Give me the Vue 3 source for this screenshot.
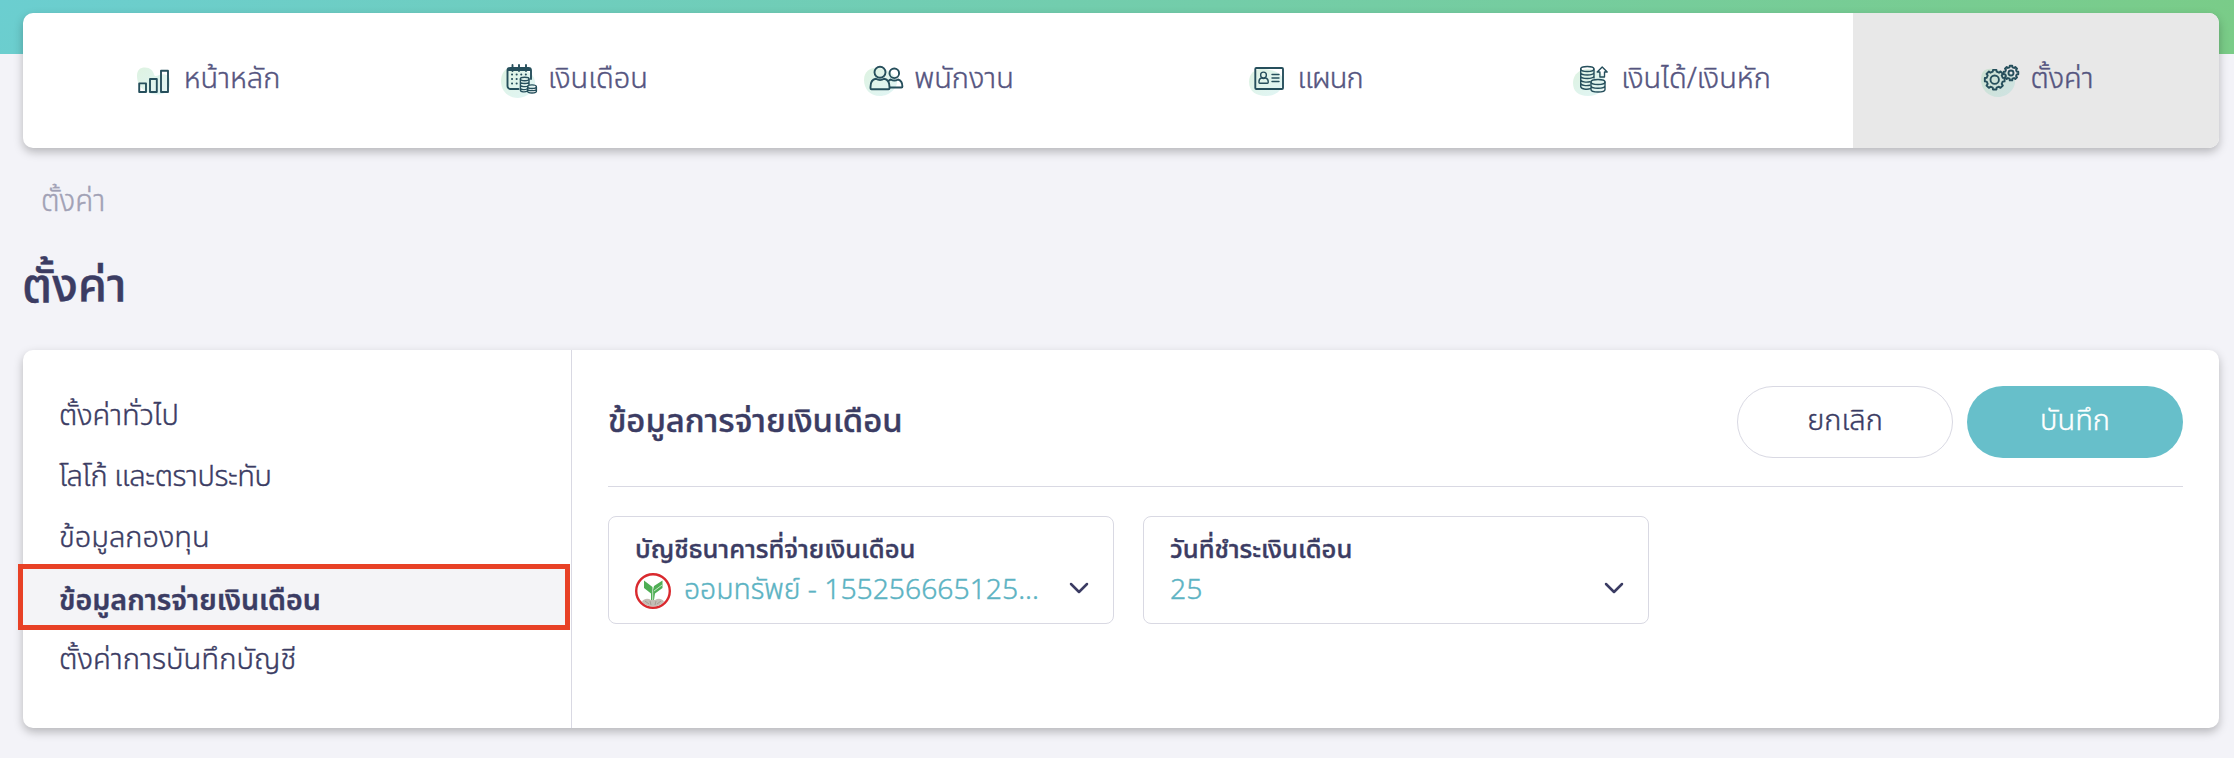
<template>
  <div class="page">
    <div class="topBar"></div>
    <nav class="navCard">
      <a v-for="item in navItems" :key="item.key" class="navItem" :class="[item.key, { active: item.key === 'settings' }]">
        <svg class="navIcon" viewBox="0 0 40 40">
          <defs>
            <linearGradient :id="'blob-' + item.key" x1="0" y1="0" x2="1" y2="1">
              <stop offset="0" stop-color="#7bcd85" stop-opacity="0.25" />
              <stop offset="1" stop-color="#6ccfcf" stop-opacity="0.2" />
            </linearGradient>
          </defs>
          <path :d="item.blob" :fill="`url(#blob-${item.key})`" />
          <g class="lines">
            <template v-if="item.key === 'home'">
              <rect x="2.2" y="22.4" width="6.8" height="8.6" />
              <rect x="13" y="18" width="6.8" height="13" />
              <rect x="24" y="9.8" width="7" height="21.2" />
            </template>
            <template v-else-if="item.key === 'salary'">
              <path d="M17.5 28H9.5a3 3 0 0 1-3-3V9.5a2.5 2.5 0 0 1 2.5-2.5h18.5a2.5 2.5 0 0 1 2.5 2.5V18M6.5 9h23.5" />
              <path d="M11.5 4v6M18 4v6M25 4v6" />
              <path class="dots" d="M11 13.5h17M11 18h9M11 22.5h7" />
              <g class="thin">
                <ellipse cx="23.7" cy="18" rx="4.3" ry="1.7" />
                <path d="M19.4 18v11c0 2.2 5 2.4 7 1M28 18v6M19.4 21c0 2 8.6 2 8.6 0M19.4 24c0 2 6 2 7.5 1M19.4 27c0 2 5 2 6.5 1" />
                <ellipse cx="31" cy="25.7" rx="4.4" ry="1.8" />
                <path d="M26.6 25.7v4.6c0 2.2 8.8 2.2 8.8 0v-4.6M26.6 28c0 2.2 8.8 2.2 8.8 0" />
              </g>
            </template>
            <template v-else-if="item.key === 'staff'">
              <circle cx="13" cy="11.2" r="5.5" />
              <path d="M8.8 17.8C5 18.5 3.5 21.5 3.5 26v1.2c0 .8.4 1 1 1h17c.7 0 1-.3 1-1V26c0-4.5-1.5-7.5-5.3-8.2-2.5 1.6-5.8 1.6-8.4 0z" />
              <circle cx="27.3" cy="12.3" r="4.8" />
              <path d="M21.5 20c.6-.8 1.4-1.3 2.3-1.5 2.2 1.3 5 1.3 7.2 0 3 .8 4.4 3.2 4.4 7 0 .7-.3 1-1 1H23" />
            </template>
            <template v-else-if="item.key === 'department'">
              <rect x="5.3" y="7" width="27.7" height="21" rx="1" />
              <g class="thin">
                <circle cx="13.5" cy="14" r="2.9" />
                <path d="M11.5 17c-2 .4-2.7 2-2.5 4.5 0 .5.3.7.7.7h7.8c.5 0 .7-.3.7-.7.2-2.5-.6-4.1-2.7-4.5-1.3.8-2.7.8-4 0zM22 13.5h7M22 17h7M22 20.5h7" />
              </g>
            </template>
            <template v-else-if="item.key === 'income'">
              <g class="coins">
                <ellipse cx="13.3" cy="8" rx="6.6" ry="2.5" />
                <path d="M6.7 8v17.5c0 2.5 6 3.3 9.8 2.2M20 8v9M6.7 11.5c0 3.3 13.3 3.3 13.3 0M6.7 15c0 3.3 13.3 3.3 13.3 0M6.7 18.5c0 2.7 6 3 9.3 2.2M6.7 22c0 2.7 6 3 9.3 2.2" />
                <ellipse cx="24" cy="21" rx="7" ry="2.5" />
                <path d="M17 21v7.5c0 3.3 14 3.3 14 0V21M17 24.7c0 3.3 14 3.3 14 0" />
                <path d="M28.2 6l5 5h-2.7v5h-4.6v-5h-2.7z" />
              </g>
            </template>
            <template v-else>
              <path :d="gear(11.7, 18.7, 10, 8.2)" />
              <circle cx="11.7" cy="18.7" r="4.2" />
              <path :d="gear(28, 12, 7.4, 5.9)" />
              <circle cx="28" cy="12" r="2.5" />
            </template>
          </g>
        </svg>
        <span class="navLabel">{{ item.label }}</span>
      </a>
    </nav>

    <div class="breadcrumb">ตั้งค่า</div>
    <h1 class="title">ตั้งค่า</h1>

    <div class="settingsCard">
      <ul class="sideMenu">
        <li v-for="name in menuItems" :key="name" :class="{ selected: name === currentMenu }">
          <span>{{ name }}</span>
        </li>
      </ul>
      <section class="panel">
        <div class="panelHeader">
          <h2 class="panelTitle">ข้อมูลการจ่ายเงินเดือน</h2>
          <div class="actions">
            <button class="cancelButton">ยกเลิก</button>
            <button class="saveButton">บันทึก</button>
          </div>
        </div>
        <div class="fields">
          <div class="field">
            <div class="fieldText">
              <label>บัญชีธนาคารที่จ่ายเงินเดือน</label>
              <div class="fieldValue">
                <svg class="bankLogo" viewBox="0 0 36 36">
                  <circle cx="18" cy="18" r="16.8" fill="#fff" stroke="#d9292e" stroke-width="2.4" />
                  <path d="M7 28.5c2-3 6-3.5 9-1.5h4c3-2 7-1.5 9 1.5-3 3.8-7 5-11 5s-8-1.2-11-5z" fill="#c3bdb5" />
                  <path d="M10 28l4 3M15 28l1 4M21 28l-1 4M26 28l-4 3" stroke="#a59d94" fill="none" />
                  <path d="M16 27V20.5L9 15V7.5l8.5 6.5v5l1.5-6 8.5-5.5V15l-7.5 5.5-1 6.5z" fill="#4fae55" />
                  <path d="M17.7 27v-9.5M19 18l8-6" stroke="#e4f4e3" stroke-width="0.8" fill="none" />
                </svg>
                <span>ออมทรัพย์ - 155256665125...</span>
              </div>
            </div>
            <svg class="chevron" viewBox="0 0 20 12"><path d="M2 2l8 8 8-8" /></svg>
          </div>
          <div class="field">
            <div class="fieldText">
              <label>วันที่ชำระเงินเดือน</label>
              <div class="fieldValue"><span>25</span></div>
            </div>
            <svg class="chevron" viewBox="0 0 20 12"><path d="M2 2l8 8 8-8" /></svg>
          </div>
        </div>
      </section>
    </div>
  </div>
</template>

<script setup>
import { ref } from 'vue'

const navItems = [
  { key: 'home', label: 'หน้าหลัก', blob: 'M0 15C0 9 3 6.5 8 6.5s8 3 9 7 6-1 11 0 5 5 5 10-5 11-14 10S0 27 0 15z' },
  { key: 'salary', label: 'เงินเดือน', blob: 'M0 20C0 11 6 5 14 6s19 6 20 14-7 17-17 17S0 30 0 20z' },
  { key: 'staff', label: 'พนักงาน', blob: 'M-3 19C-3 10 4 6 12 7s17 7 18 13-7 15-17 15S-3 28-3 19z' },
  { key: 'department', label: 'แผนก', blob: 'M-1 21C-1 12 6 7 14 8s19 3 19 12-7 15-17 15S-1 30-1 21z' },
  { key: 'income', label: 'เงินได้/เงินหัก', blob: 'M-1 22C-1 13 6 8 14 8s17 5 17 13-7 14-17 14S-1 30-1 22z' },
  { key: 'settings', label: 'ตั้งค่า', blob: 'M-2 19C-2 10 2 7 10 8s21 3 22 11-7 17-17 17S-2 28-2 19z' }
]

const menuItems = [
  'ตั้งค่าทั่วไป',
  'โลโก้ และตราประทับ',
  'ข้อมูลกองทุน',
  'ข้อมูลการจ่ายเงินเดือน',
  'ตั้งค่าการบันทึกบัญชี'
]
const currentMenu = ref('ข้อมูลการจ่ายเงินเดือน')

// outline of an 8 tooth gear
function gear(cx, cy, outer, inner) {
  const points = []
  for (let i = 0; i < 8; i++) {
    const base = (i * Math.PI) / 4
    const steps = [[-0.24, inner], [-0.17, outer], [0.17, outer], [0.24, inner]]
    for (const [offset, r] of steps) {
      const x = cx + r * Math.cos(base + offset)
      const y = cy + r * Math.sin(base + offset)
      points.push(x.toFixed(2) + ' ' + y.toFixed(2))
    }
  }
  return 'M' + points.join('L') + 'Z'
}
</script>

<style>
html,
body {
  margin: 0;
  background-color: #f3f3f8;
}
</style>

<style scoped>
.page {
  position: relative;
  height: 758px;
  overflow: hidden;
  box-sizing: border-box;
  padding: 13px 15px 0 23px;
  background-color: #f3f3f8;
  color: #3b3c63;
  font-family: "Noto Sans Thai", "Noto Sans", "Open Sans", sans-serif;
  font-weight: 300;
  -webkit-text-stroke-width: 0.4px;
}

.topBar {
  position: absolute;
  top: 0;
  left: 0;
  width: 100%;
  height: 54px;
  background: linear-gradient(135deg, #6bced0, #7acc87);
}

.navCard {
  position: relative;
  display: flex;
  height: 135px;
  border-radius: 10px;
  overflow: hidden;
  background-color: white;
}

.navCard,
.settingsCard {
  box-shadow: 0 4px 10px rgba(0, 0, 0, 0.25);
}

.navItem {
  flex: 1;
  display: flex;
  align-items: center;
  justify-content: center;
  gap: 7px;
  padding-left: 5px;
  color: #55557f;
}

.navItem.active {
  background-color: #e8e8e8;
}

.navIcon {
  width: 40px;
  height: 40px;
  overflow: visible;
}

.lines {
  fill: none;
  stroke: #264f5c;
  stroke-width: 1.9;
  stroke-linejoin: round;
  stroke-linecap: round;
}

.thin,
.coins {
  stroke-width: 1.4;
}

.dots {
  stroke-width: 2;
  stroke-dasharray: 0.1 4.5;
}

.navLabel {
  margin-bottom: 3px;
  font-size: 29px;
  line-height: 40px;
  white-space: nowrap;
}

.department .navLabel {
  letter-spacing: -1px;
}

.breadcrumb {
  margin: 33px 0 0 18px;
  height: 42px;
  font-size: 29.5px;
  line-height: 42px;
  color: #a1a1b5;
}

.title {
  margin: 35px 0 0 -1px;
  height: 60px;
  font-size: 47px;
  line-height: 60px;
  font-weight: 500;
}

.settingsCard {
  display: flex;
  height: 378px;
  margin-top: 32px;
  border-radius: 10px;
  background-color: white;
}

.sideMenu {
  width: 548px;
  margin: 0;
  padding: 36px 0 0;
  list-style: none;
  border-right: 1px solid #d9d9e3;
}

.sideMenu li {
  height: 61px;
  padding-left: 36px;
  font-size: 29px;
  line-height: 60px;
  white-space: nowrap;
}

.sideMenu li:nth-child(2) {
  letter-spacing: -0.4px;
}

.sideMenu li:last-child {
  font-size: 29.3px;
}

.sideMenu li.selected {
  box-sizing: border-box;
  width: 552px;
  height: 66px;
  margin: -5px 0 0 -5px;
  border: 5px solid #e84126;
  line-height: 66px;
  background-color: #f4f4f7;
  font-size: 28.6px;
  font-weight: 600;
}

.panel {
  flex: 1;
  padding: 36px 36px 0;
}

.panelHeader {
  display: flex;
  justify-content: space-between;
  height: 100px;
  border-bottom: 1px solid #d9d9e3;
}

.panelTitle {
  margin: 0;
  font-size: 32.8px;
  line-height: 72px;
  font-weight: 500;
}

.actions {
  display: flex;
  gap: 14px;
}

button {
  width: 216px;
  height: 72px;
  border-radius: 36px;
  padding: 0 0 3px;
  font-family: inherit;
  font-weight: inherit;
  font-size: 29px;
  cursor: pointer;
}

.cancelButton {
  border: 1px solid #d9d9e3;
  background-color: white;
  color: #3b3c63;
}

.saveButton {
  border: none;
  background-color: #67bfca;
  color: white;
}

.fields {
  display: flex;
  gap: 29px;
  margin-top: 29px;
}

.field {
  display: flex;
  justify-content: space-between;
  box-sizing: border-box;
  width: 506px;
  height: 108px;
  padding: 16px 24px 0 26px;
  border: 1px solid #d9d9e3;
  border-radius: 8px;
}

.field label {
  display: block;
  height: 36px;
  font-size: 25.6px;
  line-height: 36px;
  font-weight: 500;
  white-space: nowrap;
}

.fieldValue {
  display: flex;
  align-items: center;
  height: 44px;
  font-size: 28.3px;
  line-height: 46px;
  color: #5cb3c3;
  white-space: nowrap;
}

.bankLogo {
  width: 36px;
  height: 36px;
  margin-right: 13px;
}

.chevron {
  width: 20px;
  height: 12px;
  margin-top: 49px;
  fill: none;
  stroke: #3b3c63;
  stroke-width: 2.5;
  stroke-linecap: round;
  stroke-linejoin: round;
}
</style>
